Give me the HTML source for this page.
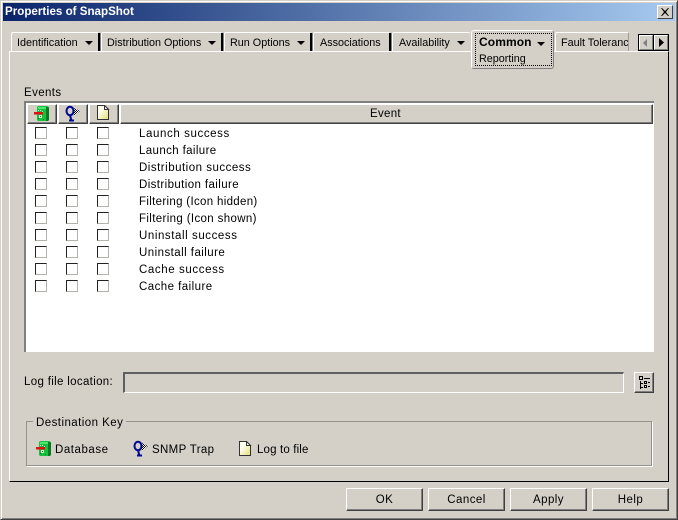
<!DOCTYPE html>
<html><head><meta charset="utf-8"><style>
html,body{margin:0;padding:0;background:#d4d0c8}
#w{position:relative;width:678px;height:520px;overflow:hidden;background:#d4d0c8;font:11.5px "Liberation Sans",sans-serif;color:#000}
#w div,#w span,#w svg{position:absolute;box-sizing:border-box}
.t{white-space:nowrap;letter-spacing:.45px;line-height:14px;margin-top:1px}
.tb{white-space:nowrap;font-size:10.8px;line-height:14px;margin-top:1px}
.tab{top:32px;height:19px;background:#d4d0c8;border-top:1px solid #fff;border-left:1px solid #fff;border-radius:2px 2px 0 0;z-index:2}
.tab i{position:absolute;right:-2px;top:0;width:2px;height:18px;background:#000;border-right:1px solid #808080}
.arr{position:absolute;width:0;height:0;border:4px solid transparent;border-top:4px solid #000;border-bottom:0}
.hd{top:104px;height:20px;background:#d4d0c8;border:1px solid;border-color:#fff #404040 #404040 #fff;box-shadow:inset -1px -1px 0 #808080}
.cb{width:12px;height:12px;background:#fff;border:1px solid;border-color:#222 #b5b2ab #b5b2ab #222}
.btn{top:488px;width:77px;height:23px;background:#d4d0c8;border:1px solid;border-color:#fff #404040 #404040 #fff;box-shadow:inset -1px -1px 0 #808080;text-align:center;line-height:23px;letter-spacing:.45px}
</style></head><body><div id="w">
<div style="left:0;top:0;width:678px;height:520px;border:1px solid;border-color:#d4d0c8 #404040 #404040 #d4d0c8;box-shadow:inset 1px 1px 0 #fff,inset -1px -1px 0 #808080"></div>
<div style="left:3px;top:3px;width:672px;height:18px;background:linear-gradient(90deg,#0a246a,#a6caf0)"></div>
<div class="t" style="left:5px;top:5px;margin:0;color:#fff;font-weight:bold;font-size:11.6px;letter-spacing:0">Properties of SnapShot</div>
<div style="left:657px;top:5px;width:16px;height:14px;background:#d4d0c8;border:1px solid;border-color:#fff #404040 #404040 #fff"><svg style="left:3px;top:2px" width="9" height="8"><path d="M1 0l3 3 3-3h1L5 4l3 4H7L4 5 1 8H0l3-4-3-4z" fill="#000"/></svg></div>

<!-- panel -->
<div style="left:9px;top:51px;width:660px;height:431px;border:1px solid;border-color:#fff #000 #000 #fff"></div>

<!-- tabs -->
<div class="tab" style="left:11px;width:88px"><i></i><span class="tb" style="left:5px;top:2px">Identification</span><b class="arr" style="left:73px;top:8px"></b></div>
<div class="tab" style="left:101px;width:121px"><i></i><span class="tb" style="left:5px;top:2px">Distribution Options</span><b class="arr" style="left:106px;top:8px"></b></div>
<div class="tab" style="left:224px;width:87px"><i></i><span class="tb" style="left:5px;top:2px">Run Options</span><b class="arr" style="left:72px;top:8px"></b></div>
<div class="tab" style="left:313px;width:77px"><i></i><span class="tb" style="left:6px;top:2px">Associations</span></div>
<div class="tab" style="left:392px;width:78px"><span class="tb" style="left:6px;top:2px">Availability</span><b class="arr" style="left:64px;top:8px"></b></div>
<div class="tab" style="left:555px;width:74px;overflow:hidden;border-right:1px solid #a09d96"><span class="tb" style="left:5px;top:2px">Fault Tolerance</span></div>
<div style="left:471px;top:30px;width:83px;height:39px;background:#d4d0c8;border:1px solid;border-color:#fff #808080 #808080 #fff;border-radius:3px;z-index:3">
<div style="left:3px;top:2px;width:77px;height:33px;border:1px dotted #000"></div>
<span class="t" style="left:7px;top:4px;margin:0;font-weight:bold;font-size:12px;letter-spacing:.1px">Common</span><b class="arr" style="left:65px;top:11px"></b>
<span class="tb" style="left:7px;top:20px">Reporting</span></div>
<div style="left:638px;top:34px;width:31px;height:17px;background:#000;z-index:3"></div>
<div style="left:639px;top:35px;width:14px;height:15px;background:#d4d0c8;border:1px solid;border-color:#fff #808080 #808080 #fff;z-index:4"><svg style="left:3px;top:3px" width="6" height="8"><path d="M4 0v8L0 4z" fill="#808080"/></svg></div>
<div style="left:654px;top:35px;width:14px;height:15px;background:#d4d0c8;border:1px solid;border-color:#fff #808080 #808080 #fff;z-index:4"><svg style="left:4px;top:2px" width="6" height="9"><path d="M0 0v9l5-4.500z" fill="#000"/></svg></div>

<div class="t" style="left:24px;top:85px;letter-spacing:.4px">Events</div>
<!-- table -->
<div style="left:24px;top:101px;width:630px;height:251px;background:#fff;border-style:solid;border-width:2px 0 0 2px;border-color:#808080"></div>
<div class="hd" style="left:27px;width:30px"></div>
<div class="hd" style="left:58px;width:30px"></div>
<div class="hd" style="left:89px;width:30px"></div>
<div class="hd" style="left:120px;width:533px"><span class="t" style="left:249px;top:2px;margin:0;letter-spacing:.3px">Event</span></div>

<!-- header icons -->
<svg style="left:34px;top:106px" width="16" height="16"><path d="M3 1l1-1h9l2 1v13l-2 1H4l-1-1z" fill="#18c040"/><path d="M12 1h2l1 1v12l-1 1h-2z" fill="#0a7a24"/><path d="M4 1h8v2H4z" fill="#4ce86e"/><path d="M4 4h1v1H4zM6 4h1v1H6zM8 5h1v1H8zM5 9h3v3H5z" fill="#d8f2d0"/><path d="M6 10h1v1H6zM4 12h1v1H4zM9 13h1v1H9z" fill="#0a7a24"/><path d="M0 6h9v2.500H0z" fill="#e01010"/></svg>
<svg style="left:65px;top:105px" width="16" height="17"><defs><pattern id="c1" width="2" height="2" patternUnits="userSpaceOnUse"><rect width="2" height="2" fill="#fff"/><rect width="1" height="1" fill="#000"/><rect x="1" y="1" width="1" height="1" fill="#000"/></pattern></defs><path d="M7 2l8 4-6 5z" fill="url(#c1)"/><ellipse cx="5" cy="6" rx="3.500" ry="4.200" fill="none" stroke="#000a90" stroke-width="2"/><path d="M5 10l1.500 6M4 15.500h5" fill="none" stroke="#000a90" stroke-width="2"/></svg>
<svg style="left:97px;top:105px" width="13" height="16"><defs><linearGradient id="n1" x1="0" y1="0" x2="1" y2="1"><stop offset=".3" stop-color="#fffff0"/><stop offset="1" stop-color="#e4dc78"/></linearGradient></defs><path d="M.5.5h7l4 4v10H.5z" fill="url(#n1)" stroke="#333"/><path d="M7.500.5v4h4z" fill="#fff" stroke="#333"/></svg>

<!-- rows -->
<div class="cb" style="left:35px;top:127px"></div><div class="cb" style="left:66px;top:127px"></div><div class="cb" style="left:97px;top:127px"></div><div class="t" style="left:139px;top:126px;letter-spacing:.6px">Launch success</div>
<div class="cb" style="left:35px;top:144px"></div><div class="cb" style="left:66px;top:144px"></div><div class="cb" style="left:97px;top:144px"></div><div class="t" style="left:139px;top:143px;letter-spacing:.38px">Launch failure</div>
<div class="cb" style="left:35px;top:161px"></div><div class="cb" style="left:66px;top:161px"></div><div class="cb" style="left:97px;top:161px"></div><div class="t" style="left:139px;top:160px;letter-spacing:.5px">Distribution success</div>
<div class="cb" style="left:35px;top:178px"></div><div class="cb" style="left:66px;top:178px"></div><div class="cb" style="left:97px;top:178px"></div><div class="t" style="left:139px;top:177px;letter-spacing:.4px">Distribution failure</div>
<div class="cb" style="left:35px;top:195px"></div><div class="cb" style="left:66px;top:195px"></div><div class="cb" style="left:97px;top:195px"></div><div class="t" style="left:139px;top:194px;letter-spacing:.32px">Filtering (Icon hidden)</div>
<div class="cb" style="left:35px;top:212px"></div><div class="cb" style="left:66px;top:212px"></div><div class="cb" style="left:97px;top:212px"></div><div class="t" style="left:139px;top:211px;letter-spacing:.36px">Filtering (Icon shown)</div>
<div class="cb" style="left:35px;top:229px"></div><div class="cb" style="left:66px;top:229px"></div><div class="cb" style="left:97px;top:229px"></div><div class="t" style="left:139px;top:228px;letter-spacing:.57px">Uninstall success</div>
<div class="cb" style="left:35px;top:246px"></div><div class="cb" style="left:66px;top:246px"></div><div class="cb" style="left:97px;top:246px"></div><div class="t" style="left:139px;top:245px">Uninstall failure</div>
<div class="cb" style="left:35px;top:263px"></div><div class="cb" style="left:66px;top:263px"></div><div class="cb" style="left:97px;top:263px"></div><div class="t" style="left:139px;top:262px;letter-spacing:.6px">Cache success</div>
<div class="cb" style="left:35px;top:280px"></div><div class="cb" style="left:66px;top:280px"></div><div class="cb" style="left:97px;top:280px"></div><div class="t" style="left:139px;top:279px">Cache failure</div>

<!-- log file -->
<div class="t" style="left:24px;top:374px;letter-spacing:.33px">Log file location:</div>
<div style="left:123px;top:372px;width:501px;height:21px;border-style:solid;border-width:2px 1px 1px 2px;border-color:#606060 #fff #fff #606060"></div>
<div style="left:634px;top:372px;width:20px;height:21px;border:1px solid;border-color:#fff #404040 #404040 #fff;box-shadow:inset -1px -1px 0 #808080"><svg style="left:4px;top:3px" width="12" height="13"><path d="M.5.5h3v3h-3zM5.500 5.500h2v2h-2zM5.500 9.500h2v2h-2z" fill="none" stroke="#000"/><path d="M5 2h6v1H5zM1 5h1v8H1zM2 7h2v1H2zM2 11h2v1H2zM9 6h2v1H9zM9 10h2v1H9z" fill="#000"/></svg></div>

<!-- group -->
<div style="left:26px;top:421px;width:626px;height:45px;border:1px solid #95928c;box-shadow:1px 1px 0 #fff"></div>
<div class="t" style="left:33px;top:415px;background:#d4d0c8;padding:0 3px">Destination Key</div>
<svg style="left:36px;top:441px" width="16" height="16"><path d="M3 1l1-1h9l2 1v13l-2 1H4l-1-1z" fill="#18c040"/><path d="M12 1h2l1 1v12l-1 1h-2z" fill="#0a7a24"/><path d="M4 1h8v2H4z" fill="#4ce86e"/><path d="M4 4h1v1H4zM6 4h1v1H6zM8 5h1v1H8zM5 9h3v3H5z" fill="#d8f2d0"/><path d="M6 10h1v1H6zM4 12h1v1H4zM9 13h1v1H9z" fill="#0a7a24"/><path d="M0 6h9v2.500H0z" fill="#e01010"/></svg>
<div class="t" style="left:55px;top:442px;letter-spacing:.55px">Database</div>
<svg style="left:133px;top:440px" width="16" height="17"><defs><pattern id="c2" width="2" height="2" patternUnits="userSpaceOnUse"><rect width="2" height="2" fill="#fff"/><rect width="1" height="1" fill="#000"/><rect x="1" y="1" width="1" height="1" fill="#000"/></pattern></defs><path d="M7 2l8 4-6 5z" fill="url(#c2)"/><ellipse cx="5" cy="6" rx="3.500" ry="4.200" fill="none" stroke="#000a90" stroke-width="2"/><path d="M5 10l1.500 6M4 15.500h5" fill="none" stroke="#000a90" stroke-width="2"/></svg>
<div class="t" style="left:152px;top:442px;letter-spacing:.35px">SNMP Trap</div>
<svg style="left:239px;top:441px" width="13" height="16"><defs><linearGradient id="n2" x1="0" y1="0" x2="1" y2="1"><stop offset=".3" stop-color="#fffff0"/><stop offset="1" stop-color="#e4dc78"/></linearGradient></defs><path d="M.5.5h7l4 4v10H.5z" fill="url(#n2)" stroke="#333"/><path d="M7.500.5v4h4z" fill="#fff" stroke="#333"/></svg>
<div class="t" style="left:257px;top:442px;letter-spacing:.15px">Log to file</div>

<!-- buttons -->
<div class="btn" style="left:346px">OK</div>
<div class="btn" style="left:428px">Cancel</div>
<div class="btn" style="left:510px">Apply</div>
<div class="btn" style="left:592px">Help</div>
</div></body></html>
